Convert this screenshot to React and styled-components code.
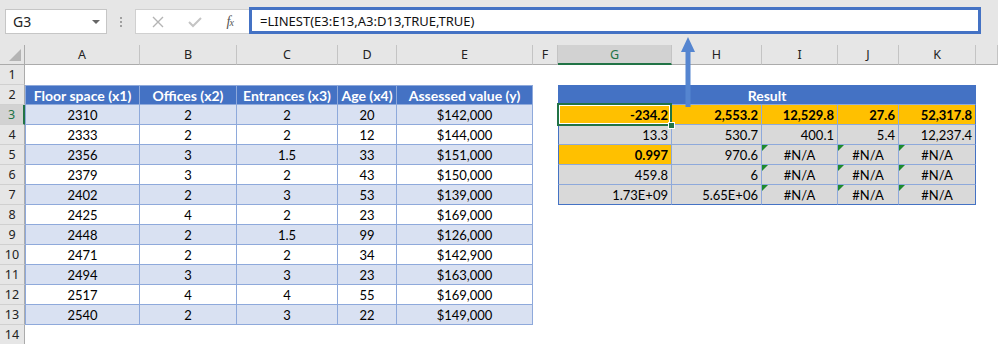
import React from "react";
import styled, { createGlobalStyle, css } from "styled-components";

const GlobalStyle = createGlobalStyle`
  html, body {
    margin: 0;
    padding: 0;
    background: #ffffff;
  }
  body {
    font-family: "Noto Sans", "Open Sans", sans-serif;
    overflow: hidden;
  }
`;

const GREEN = "#217346";
const BLUE = "#4472c4";
const LINE = "#8ea9db";

const Page = styled.div`
  position: relative;
  width: 998px;
  height: 344px;
  overflow: hidden;
  background: #fff;
`;

const FormulaBar = styled.div`
  display: flex;
  align-items: center;
  height: 45px;
  padding: 0 0 2px 5px;
  box-sizing: border-box;
  background: #e6e6e6;
`;

const NameBox = styled.div`
  display: flex;
  align-items: center;
  justify-content: space-between;
  width: 102px;
  height: 25px;
  box-sizing: border-box;
  padding: 0 6px 0 7px;
  background: #fff;
  border: 1px solid #c6c6c6;
  font-size: 14px;
  color: #222;
`;

const Caret = styled.span`
  width: 0;
  height: 0;
  border-left: 4px solid transparent;
  border-right: 4px solid transparent;
  border-top: 4px solid #666;
`;

const Grip = styled.div`
  display: flex;
  flex-direction: column;
  gap: 2px;
  margin: 0 13px 0 13px;
  > span {
    width: 2px;
    height: 2px;
    background: #a0a0a0;
  }
`;

const ButtonBox = styled.div`
  display: flex;
  align-items: center;
  justify-content: space-around;
  width: 114px;
  height: 25px;
  box-sizing: border-box;
  padding: 0 4px;
  background: #fff;
  border: 1px solid #d0d0d0;
  border-right: none;
`;

const Fx = styled.span`
  font-family: "Liberation Serif", serif;
  font-style: italic;
  font-size: 14px;
  color: #555;
  letter-spacing: -1px;
  > small {
    font-size: 10px;
  }
`;

const FormulaInput = styled.div`
  flex: 1;
  display: flex;
  align-items: center;
  height: 27px;
  margin-top: -2px;
  margin-right: 17px;
  box-sizing: border-box;
  padding-left: 8px;
  background: #fff;
  border: 3px solid ${BLUE};
  font-size: 13px;
  color: #111;
`;

const Sheet = styled.div`
  display: grid;
  grid-template-columns: 25px 115px 97px 101px 59px 136px 25px 114px 90px 76px 61px 77px 1fr;
  grid-auto-rows: 20px;
  font-family: "Lato", "Liberation Sans", sans-serif;
  font-size: 13px;
  color: #000;
`;

const ColHead = styled.div`
  display: flex;
  align-items: center;
  justify-content: center;
  box-sizing: border-box;
  background: ${(p) => (p.$active ? "#d2d2d2" : "#e6e6e6")};
  border-right: 1px solid #c4c4c4;
  border-bottom: ${(p) => (p.$active ? `2px solid ${GREEN}` : "1px solid #ababab")};
  font-family: "Noto Sans", "Open Sans", sans-serif;
  font-size: 12.5px;
  color: ${(p) => (p.$active ? GREEN : "#222")};
`;

const Corner = styled.div`
  position: relative;
  background: #e6e6e6;
  box-sizing: border-box;
  border-right: 1px solid #ababab;
  border-bottom: 1px solid #ababab;
  &::after {
    content: "";
    position: absolute;
    right: 3px;
    bottom: 3px;
    width: 0;
    height: 0;
    border-left: 12px solid transparent;
    border-bottom: 12px solid #b4b4b4;
  }
`;

const RowHead = styled.div`
  display: flex;
  align-items: center;
  justify-content: center;
  box-sizing: border-box;
  background: ${(p) => (p.$active ? "#d2d2d2" : "#e6e6e6")};
  border-bottom: 1px solid #d0d0d0;
  border-right: ${(p) => (p.$active ? `2px solid ${GREEN}` : "1px solid #ababab")};
  font-family: "Noto Sans", "Open Sans", sans-serif;
  font-size: 12.5px;
  color: ${(p) => (p.$active ? GREEN : "#222")};
`;

const fills = {
  head: "#4472c4",
  band: "#d9e1f2",
  plain: "#ffffff",
  gold: "#ffc000",
  gray: "#d9d9d9",
};

const Cell = styled.div`
  position: relative;
  display: flex;
  align-items: center;
  justify-content: ${(p) =>
    p.$align === "right" ? "flex-end" : p.$align === "left" ? "flex-start" : "center"};
  box-sizing: border-box;
  padding: 0 3px 0 3px;
  white-space: nowrap;
  background: ${(p) => fills[p.$fill] || "#fff"};
  font-weight: ${(p) => (p.$bold ? 700 : 400)};
  font-size: ${(p) => (p.$fill === "head" ? "14px" : "13px")};
  color: ${(p) => (p.$fill === "head" ? "#fff" : "#000")};
  ${(p) => p.$span && css`grid-column: span ${p.$span};`}
  ${(p) =>
    p.$boxed &&
    css`
      border-right: 1px solid ${p.$edgeRight ? BLUE : LINE};
      border-bottom: 1px solid ${p.$edgeBottom ? BLUE : LINE};
      ${p.$edgeLeft && css`border-left: 1px solid ${p.$outer || LINE};`}
      ${p.$edgeTop && css`border-top: 1px solid ${p.$outer || LINE};`}
    `}
  ${(p) =>
    p.$error &&
    css`
      &::before {
        content: "";
        position: absolute;
        left: 0;
        top: 0;
        width: 0;
        height: 0;
        border-top: 6px solid #1e8a2e;
        border-right: 6px solid transparent;
      }
    `}
  ${(p) =>
    p.$selected &&
    css`
      &::after {
        content: "";
        position: absolute;
        left: -2px;
        top: -2px;
        right: -1px;
        bottom: -2px;
        border: 2px solid ${GREEN};
        box-shadow: inset 0 0 0 1px #fff;
        z-index: 2;
      }
    `}
`;

const Handle = styled.span`
  position: absolute;
  right: -4px;
  bottom: -5px;
  width: 5px;
  height: 5px;
  background: ${GREEN};
  border: 1px solid #fff;
  z-index: 3;
`;

const Arrow = styled.svg`
  position: absolute;
  left: 680px;
  top: 36px;
  z-index: 5;
`;

const columns = ["A", "B", "C", "D", "E", "F", "G", "H", "I", "J", "K", ""];

const headers = ["Floor space (x1)", "Offices (x2)", "Entrances (x3)", "Age (x4)", "Assessed value (y)"];

const data = [
  [2310, 2, 2, 20, "$142,000"],
  [2333, 2, 2, 12, "$144,000"],
  [2356, 3, 1.5, 33, "$151,000"],
  [2379, 3, 2, 43, "$150,000"],
  [2402, 2, 3, 53, "$139,000"],
  [2425, 4, 2, 23, "$169,000"],
  [2448, 2, 1.5, 99, "$126,000"],
  [2471, 2, 2, 34, "$142,900"],
  [2494, 3, 3, 23, "$163,000"],
  [2517, 4, 4, 55, "$169,000"],
  [2540, 2, 3, 22, "$149,000"],
];

const result = [
  ["-234.2", "2,553.2", "12,529.8", "27.6", "52,317.8"],
  ["13.3", "530.7", "400.1", "5.4", "12,237.4"],
  ["0.997", "970.6", "#N/A", "#N/A", "#N/A"],
  ["459.8", "6", "#N/A", "#N/A", "#N/A"],
  ["1.73E+09", "5.65E+06", "#N/A", "#N/A", "#N/A"],
];

const Blank = () => <Cell $fill="plain" />;

function LeftCells({ row }) {
  if (row === 2) {
    return headers.map((h, i) => (
      <Cell key={h} $fill="head" $bold $boxed $edgeLeft={i === 0} $edgeTop>
        {h}
      </Cell>
    ));
  }
  const rec = data[row - 3];
  if (!rec) return columns.slice(0, 5).map((c) => <Blank key={c} />);
  return rec.map((v, i) => (
    <Cell key={i} $fill={row % 2 === 1 ? "band" : "plain"} $boxed $edgeLeft={i === 0}>
      {v}
    </Cell>
  ));
}

function RightCells({ row }) {
  if (row === 2) {
    return (
      <Cell $span={5} $fill="head" $bold $boxed $edgeLeft $edgeTop $edgeRight $outer={BLUE}>
        Result
      </Cell>
    );
  }
  const rec = result[row - 3];
  if (!rec) return ["G", "H", "I", "J", "K"].map((c) => <Blank key={c} />);
  return rec.map((v, i) => {
    const gold = row === 3 || (row === 5 && i === 0);
    const na = v === "#N/A";
    const selected = row === 3 && i === 0;
    return (
      <Cell
        key={i}
        $fill={gold ? "gold" : "gray"}
        $bold={gold}
        $align={na ? "center" : "right"}
        $boxed
        $edgeLeft={i === 0}
        $edgeRight={i === 4}
        $edgeBottom={row === 7}
        $outer={BLUE}
        $error={na}
        $selected={selected}
      >
        {v}
        {selected && <Handle />}
      </Cell>
    );
  });
}

export default function App() {
  const rows = Array.from({ length: 14 }, (_, i) => i + 1);
  return (
    <Page>
      <GlobalStyle />
      <FormulaBar>
        <NameBox>
          G3
          <Caret />
        </NameBox>
        <Grip>
          <span />
          <span />
          <span />
        </Grip>
        <ButtonBox>
          <svg width="12" height="12" viewBox="0 0 12 12">
            <path d="M1 1 L11 11 M11 1 L1 11" stroke="#b4b4b4" strokeWidth="1.4" />
          </svg>
          <svg width="14" height="12" viewBox="0 0 14 12">
            <path d="M1 6 L5 10 L13 2" stroke="#c4c4c4" strokeWidth="2" fill="none" />
          </svg>
          <Fx>
            f<small>x</small>
          </Fx>
        </ButtonBox>
        <FormulaInput>=LINEST(E3:E13,A3:D13,TRUE,TRUE)</FormulaInput>
      </FormulaBar>
      <Sheet>
        <Corner />
        {columns.map((c, i) => (
          <ColHead key={i} $active={c === "G"}>
            {c}
          </ColHead>
        ))}
        {rows.map((r) => (
          <React.Fragment key={r}>
            <RowHead $active={r === 3}>{r}</RowHead>
            <LeftCells row={r} />
            <Blank />
            <RightCells row={r} />
            <Blank />
          </React.Fragment>
        ))}
      </Sheet>
      <Arrow width="16" height="72" viewBox="0 0 16 72">
        <polygon points="8,1 15,16 1,16" fill="#5585d0" />
        <rect x="5.5" y="15" width="5" height="56" fill="#5585d0" />
      </Arrow>
    </Page>
  );
}
